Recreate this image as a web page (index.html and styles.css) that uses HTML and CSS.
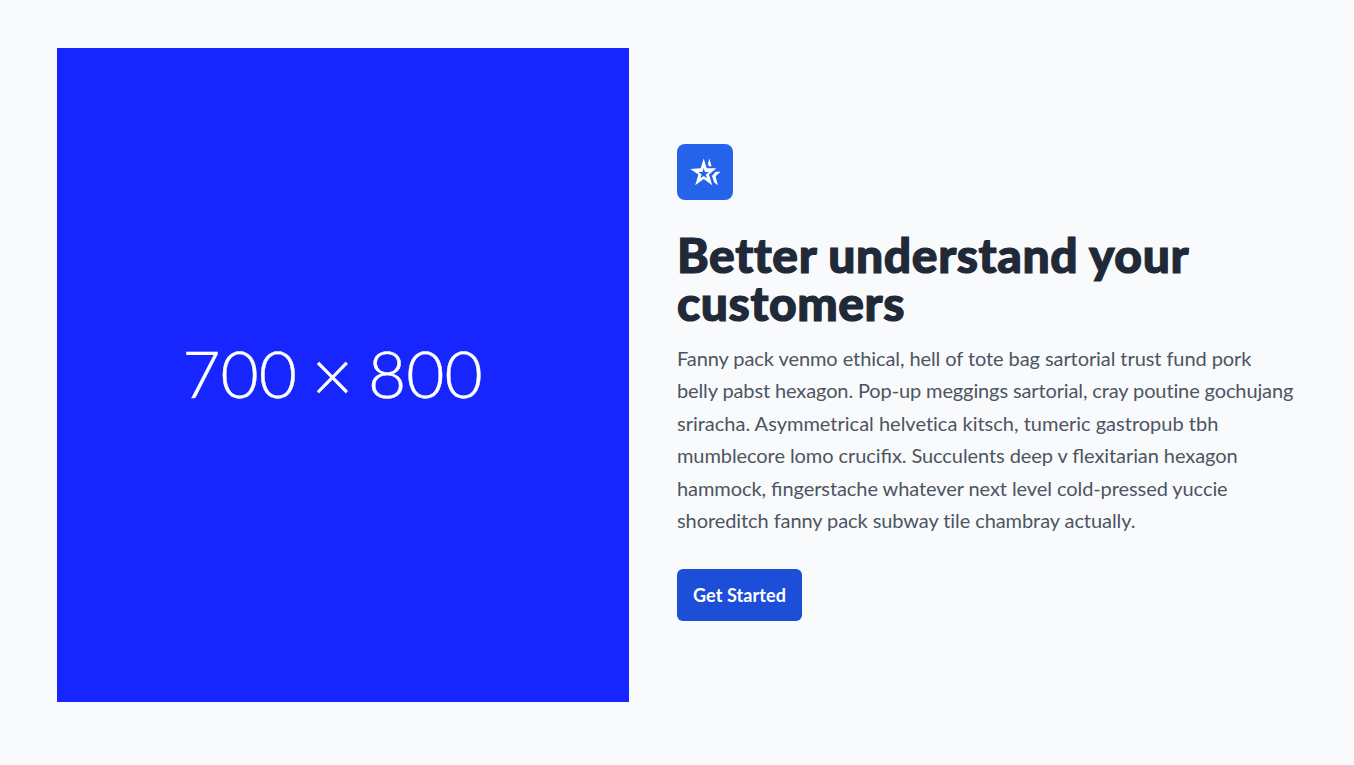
FILE: index.html
```html
<!DOCTYPE html>
<html lang="en">
<head>
<meta charset="utf-8">
<title>Better understand your customers</title>
<link rel="stylesheet" href="styles.css">
</head>
<body>
<section class="feature">
  <div class="feature-image"><span class="feature-label">700 <span class="times">×</span> 800</span></div>
  <div class="feature-body">
    <div class="feature-icon">
      <svg viewBox="0 0 32 32" width="32" height="32" fill="#fff">
        <path fill-rule="evenodd" d="M14.700 2.500L17.700 12.300H27.300L20 18.400L23.200 29.200L14.700 23L6.200 29.200L9.400 18.600L1.300 13L11.700 12.300ZM14.700 12L13.400 15.900H9.400L12.600 18.400L11.400 22.200L14.700 19.900L18 22.200L16.800 18.400L20 15.900H16Z"/>
        <path d="M20.300 2.500L22.600 10.300H19.700L19 7.200ZM31.500 15.800L26.600 20.200L28.900 29.200L25.200 26.400L23 20L26.600 15.800Z"/>
      </svg>
    </div>
    <h1 class="feature-title">Better understand your customers</h1>
    <p class="feature-text">Fanny pack venmo ethical, hell of tote bag sartorial trust fund pork <span class="tight">belly pabst hexagon. Pop-up meggings sartorial, cray poutine gochujang</span> <span class="loose">sriracha. Asymmetrical helvetica kitsch, tumeric gastropub tbh</span> mumblecore lomo cruci<span class="ligature">fi</span>x. Succulents deep v <span class="ligature">fl</span>exitarian hexagon hammock, <span class="ligature">fi</span>ngerstache whatever next level cold-pressed yuccie shoreditch fanny pack subway tile chambray actually.</p>
    <a class="button">Get Started</a>
  </div>
</section>
</body>
</html>
```
FILE: styles.css
```css
* { box-sizing: border-box; }
body { margin: 0; background: #f9fafb; font-family: Lato, sans-serif; }
.feature { display: grid; grid-template-columns: 572px 620px; column-gap: 48px; align-items: center; padding: 48px 57px; }
.feature-image { height: 654px; padding-bottom: 4px; background: #1726ff; display: flex; align-items: center; justify-content: center; }
.feature-label { color: #fff; font: 300 66px/1 Lato, sans-serif; -webkit-text-stroke: 0.4px #fff; word-spacing: -3.3px; white-space: nowrap; margin-right: 21px; }
.times { font-size: 72px; line-height: 0; vertical-align: -4px; }
.feature-body { padding-top: 15px; }
.feature-icon { width: 56px; height: 56px; border-radius: 8px; background: #2563eb; display: flex; align-items: center; justify-content: center; margin-bottom: 31px; }
.feature-title { margin: 0 0 14.5px; font-size: 48px; line-height: 48px; font-weight: 900; letter-spacing: 0.58px; -webkit-text-stroke: 1.2px #1f2937; color: #1f2937; }
.feature-text { max-width: 620px; margin: 0 0 32.5px; font-size: 20px; line-height: 32.5px; letter-spacing: -0.08px; color: #4b5563; }
.feature-text::first-line { letter-spacing: -0.08px; }
.ligature { letter-spacing: 0; }
.tight { display: inline-block; letter-spacing: -0.12px; }
.loose { letter-spacing: 0; font-variant-ligatures: none; }
.button { display: inline-block; height: 52px; padding: 12px 16px; border-radius: 6px; background: #1d4ed8; color: #fff; font-size: 18px; line-height: 28px; letter-spacing: 0.09px; font-weight: 700; }
```
